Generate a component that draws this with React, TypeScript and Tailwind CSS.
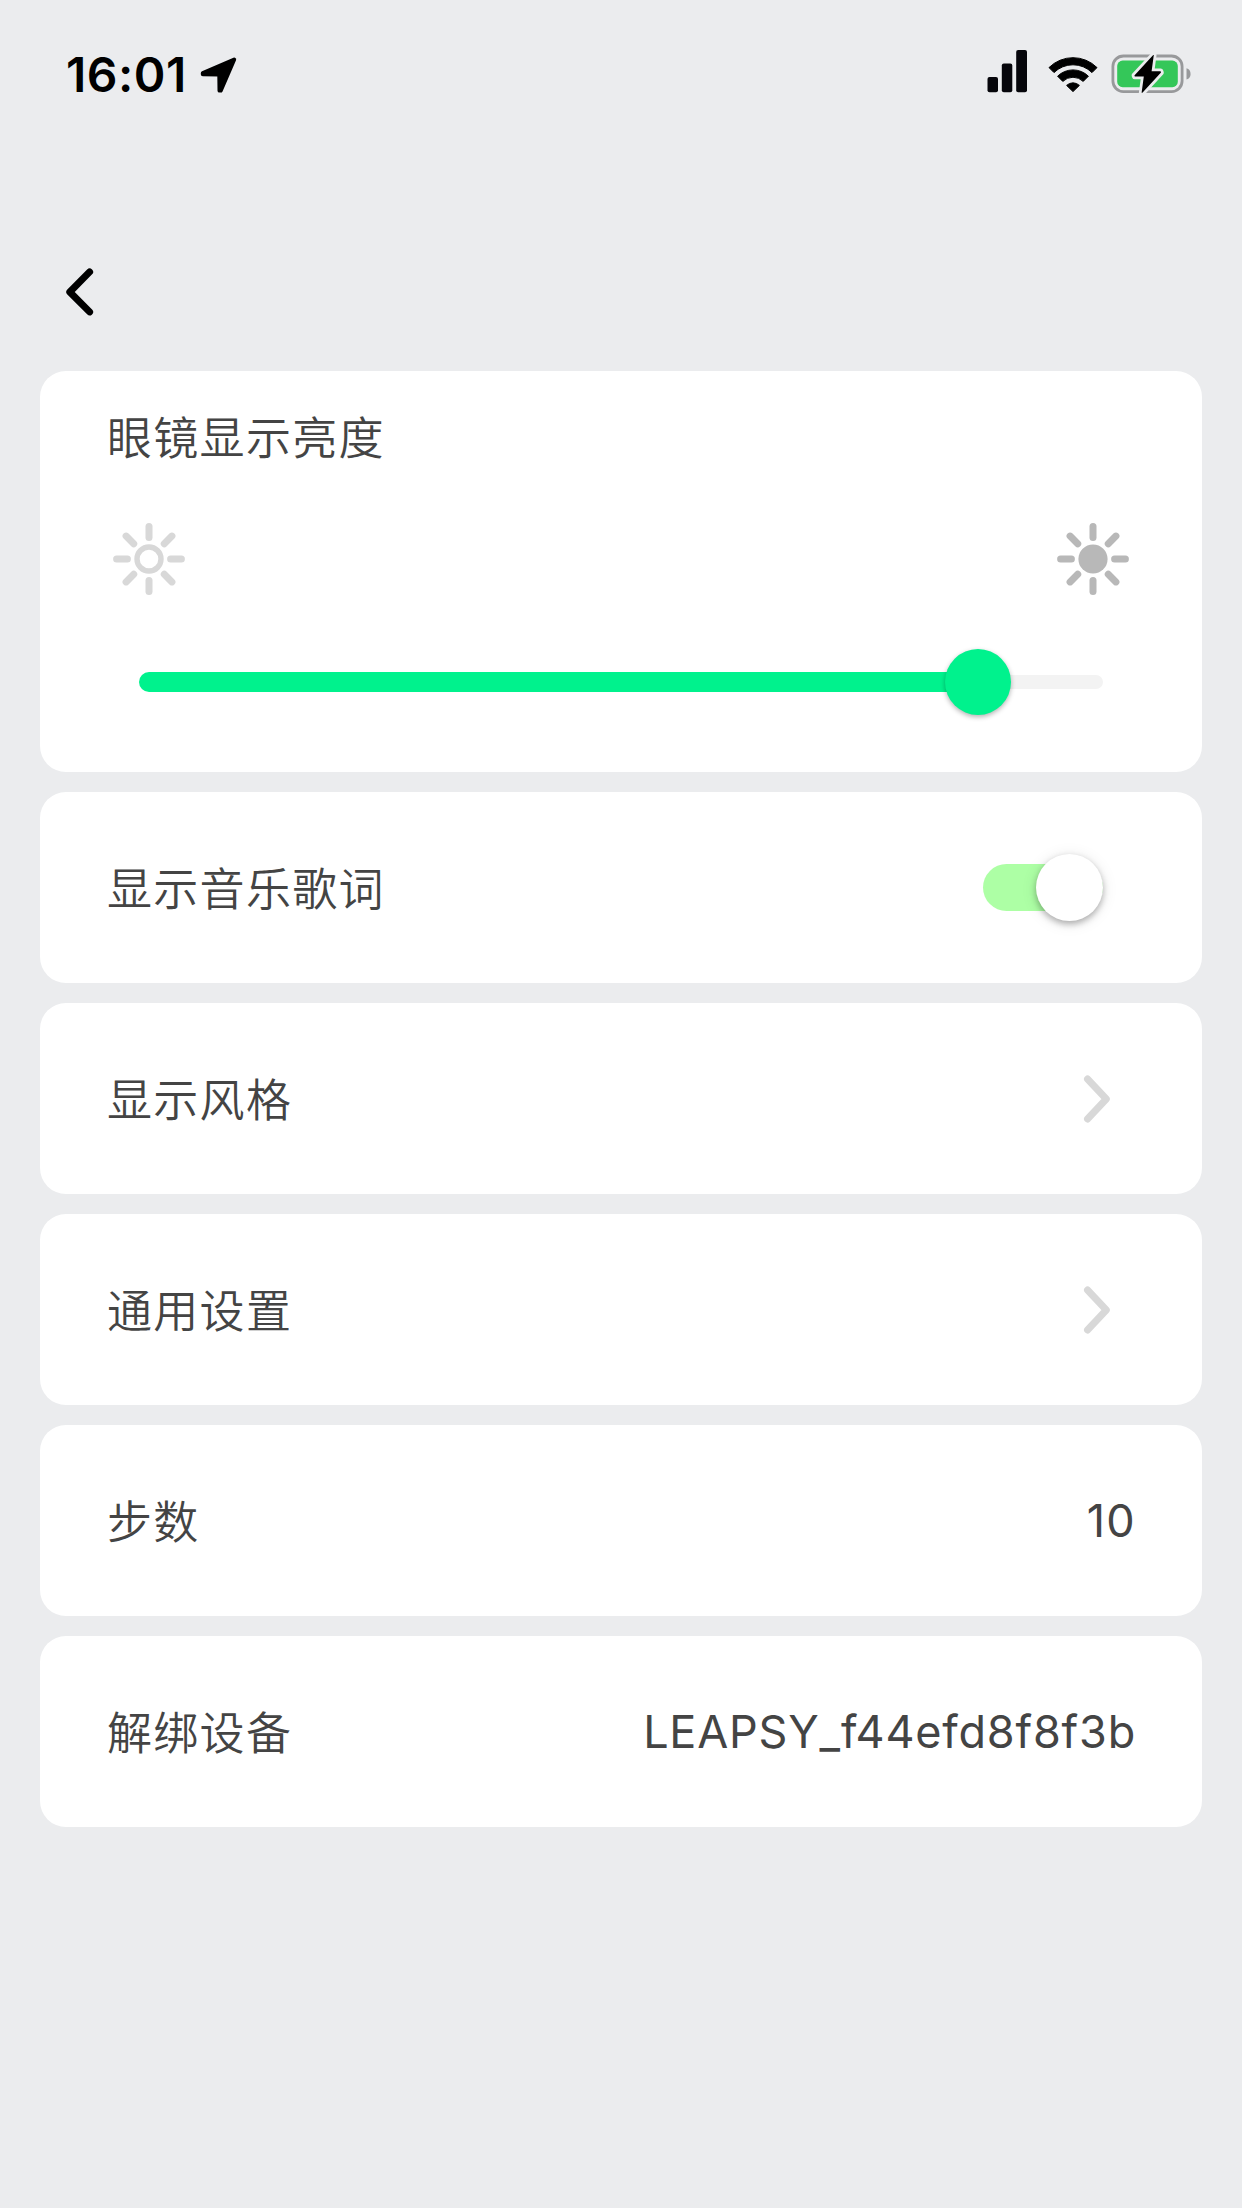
import React, { useState } from 'react';

const rayAngles = [0, 45, 90, 135, 180, 225, 270, 315];

const LocationArrow = () => (
  <svg width="40" height="40" viewBox="0 0 40 40" className="mt-0.5 ml-3">
    <path
      d="M35.2 3.5 L3.8 17.2 L3.8 18.2 L19.2 18.4 L20.3 19.5 L20.5 34.6 L21.7 34.6 Z"
      fill="#000"
      stroke="#000"
      strokeWidth="4"
      strokeLinejoin="round"
    />
  </svg>
);

const SignalIcon = () => (
  <svg width="41" height="44" viewBox="0 0 41 44">
    <rect x="0.5" y="28" width="10.5" height="15.3" rx="2" fill="#06060b" />
    <rect x="14.8" y="14.5" width="10.5" height="28.8" rx="2" fill="#06060b" />
    <rect x="29.2" y="1" width="10.8" height="42.3" rx="2" fill="#06060b" />
  </svg>
);

const WifiIcon = () => (
  <svg width="50" height="38" viewBox="0 0 50 38">
    <path d="M1 11.6 A34 34 0 0 1 49 11.6 L44 16.6 A27 27 0 0 0 6 16.6 Z" fill="#000" stroke="#000" strokeWidth="1" strokeLinejoin="round" />
    <path d="M9.6 20.2 A22 22 0 0 1 40.4 20.2 L35.2 25.4 A14.6 14.6 0 0 0 14.8 25.4 Z" fill="#000" stroke="#000" strokeWidth="1" strokeLinejoin="round" />
    <path d="M18.6 29.4 A9.3 9.3 0 0 1 31.4 29.4 L25 35.6 Z" fill="#000" stroke="#000" strokeWidth="1" strokeLinejoin="round" />
  </svg>
);

const BatteryIcon = () => (
  <svg width="82" height="44" viewBox="0 0 82 44">
    <rect x="2.9" y="5" width="69.2" height="35.6" rx="10.5" fill="none" stroke="#98999b" strokeWidth="2.8" />
    <path d="M76.5 17.3 Q80.6 18.6 80.6 22.9 Q80.6 27.2 76.5 28.5 Z" fill="#98999b" />
    <rect x="7.2" y="9.6" width="60.6" height="26.6" rx="5.5" fill="#34c759" />
    <path
      d="M43.2 4 L24.4 24.4 L24.8 25.6 L33.8 25.6 L31.6 41.8 L32.4 41.8 L51 21.6 L50.6 20.2 L41.6 20.2 L43.8 4 Z"
      fill="#000"
      stroke="#ebecee"
      strokeWidth="5.5"
      strokeLinejoin="round"
      paintOrder="stroke"
    />
  </svg>
);

const SunIcon = ({ color, filled }: { color: string; filled?: boolean }) => (
  <svg width="74" height="74" viewBox="-37 -37 74 74" stroke={color} fill="none">
    {filled ? <circle r="14.6" fill={color} stroke="none" /> : <circle r="12" strokeWidth="5.4" />}
    {rayAngles.map((angle) => (
      <line key={angle} x1="21.6" x2="32.4" y1="0" y2="0" strokeWidth="7" strokeLinecap="round" transform={`rotate(${angle})`} />
    ))}
  </svg>
);

const StatusBar = () => (
  <div className="flex h-[148px] items-start justify-between pt-[49px] pr-[50px] pl-[66px]">
    <div className="mt-px flex h-[50px] items-center">
      <span className="text-[48px] leading-[50px] font-semibold tracking-[0.5px] text-black">16:01</span>
      <LocationArrow />
    </div>
    <div className="flex items-start">
      <SignalIcon />
      <div className="mt-[7px] ml-5">
        <WifiIcon />
      </div>
      <div className="mt-[2px] ml-[12px]">
        <BatteryIcon />
      </div>
    </div>
  </div>
);

const Card = ({ label, children }: { label: string; children: React.ReactNode }) => (
  <div className="flex h-[191px] items-center justify-between rounded-[26px] bg-white pr-[66px] pl-[67px]">
    <span className="pt-1">{label}</span>
    {children}
  </div>
);

const ChevronRight = () => (
  <svg width="28" height="50" viewBox="0 0 28 50" className="mr-[25px]">
    <path d="M4.5 5 L23.3 25 L4.5 45" fill="none" stroke="#d8d8d8" strokeWidth="7" strokeLinecap="round" strokeLinejoin="round" />
  </svg>
);

const BrightnessCard = ({ value }: { value: number }) => (
  <div className="h-[401px] rounded-[26px] bg-white px-[67px] pt-[35px]">
    <div className="leading-[66px]">眼镜显示亮度</div>
    <div className="mt-[50px] flex justify-between px-[5px]">
      <SunIcon color="#d8d8d8" />
      <SunIcon color="#b8b8b8" filled />
    </div>
    {/* slider */}
    <div className="mx-8 mt-[53px] flex h-[66px] items-center">
      <div className="h-5 rounded-l-full bg-[#00f28d]" style={{ width: `${value}%` }} />
      <div className="z-10 -mx-[33px] size-[66px] shrink-0 rounded-full bg-[#00f28d] shadow-[0_2px_5px_rgba(0,0,0,0.3)]" />
      <div className="h-3.5 flex-1 rounded-r-full bg-[#f3f3f3]" />
    </div>
  </div>
);

function App() {
  const [lyrics, setLyrics] = useState(true);

  return (
    <div className="h-[2208px] w-[1242px] overflow-hidden bg-[#ebecee] font-['Inter','Noto_Sans_CJK_SC',sans-serif]">
      <StatusBar />

      {/* nav */}
      <div className="flex h-[223px] items-center pt-[64px] pl-[64px]">
        <button aria-label="返回" className="block">
          <svg width="32" height="52" viewBox="0 0 32 52">
            <path d="M25.6 5.9 L5.8 26 L25.6 45.9" fill="none" stroke="#000" strokeWidth="7" strokeLinecap="round" strokeLinejoin="round" />
          </svg>
        </button>
      </div>

      <div className="flex flex-col gap-5 px-10 text-[45px] font-[350] tracking-[1.3px] text-[#444]">
        <BrightnessCard value={87} />
        <Card label="显示音乐歌词">
          <button
            role="switch"
            aria-checked={lyrics}
            onClick={() => setLyrics(!lyrics)}
            className={`mr-[33px] flex h-[47px] w-[120px] items-center rounded-full ${lyrics ? 'justify-end bg-[#adffa5]' : 'justify-start bg-[#e0e0e0]'}`}
          >
            <span className="size-[67px] shrink-0 rounded-full bg-white shadow-[0_3px_6px_rgba(0,0,0,0.28),0_2px_16px_rgba(0,0,0,0.1)]" />
          </button>
        </Card>
        <Card label="显示风格">
          <ChevronRight />
        </Card>
        <Card label="通用设置">
          <ChevronRight />
        </Card>
        <Card label="步数">
          <span className="font-normal">10</span>
        </Card>
        <Card label="解绑设备">
          <span className="font-normal tracking-[0.8px]">LEAPSY_f44efd8f8f3b</span>
        </Card>
      </div>
    </div>
  );
}

export default App;
